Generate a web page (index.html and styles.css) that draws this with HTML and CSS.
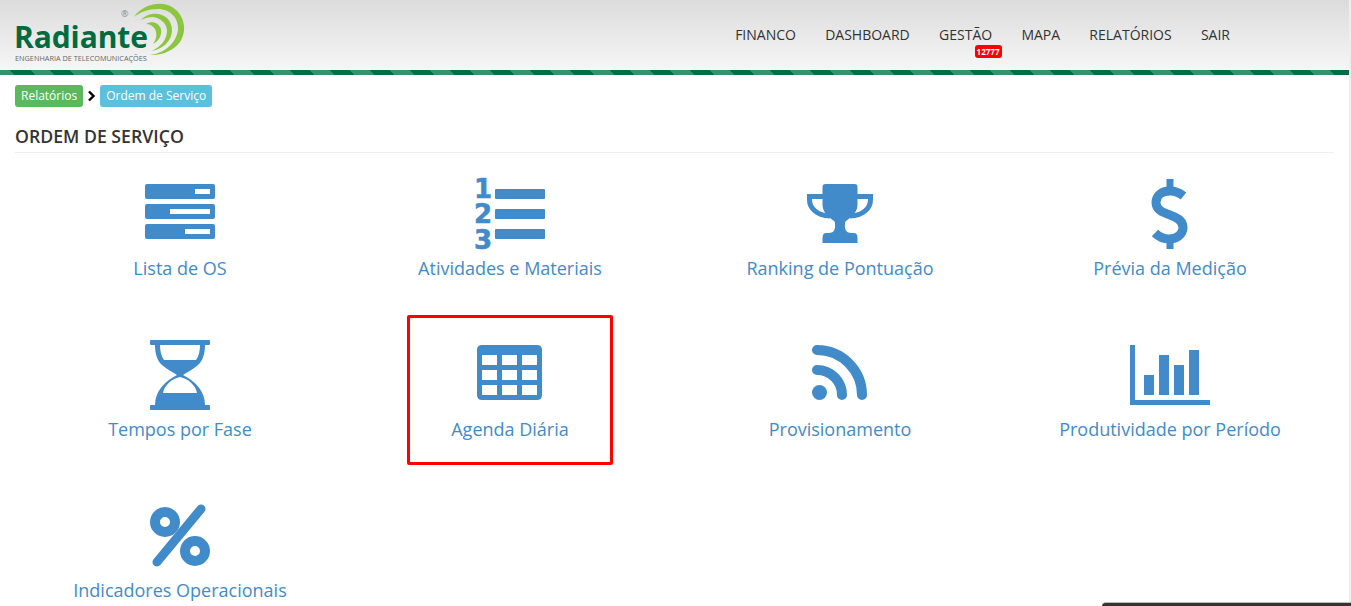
FILE: index.html
```html
<!DOCTYPE html>
<html lang="pt-BR">
<head>
<meta charset="utf-8">
<title>Ordem de Serviço</title>
<link rel="stylesheet" href="styles.css">
</head>
<body>
<header class="topbar">
  <a class="logo" href="#">
    <svg class="logo-svg" width="175" height="66" viewBox="15 0 175 66">
      <text class="logo-name" x="14" y="48">Radiante</text>
      <text class="logo-sub" x="15" y="60.500">ENGENHARIA DE TELECOMUNICAÇÕES</text>
      <text class="logo-reg" x="121" y="17">®</text>
      <path class="logo-arc" d="M134 17C142 5 160 0 172 7C184 14 188 30 180 42C174 50 162 56 150 55C164 53 176 44 178 30C179 18 170 9 158 9C148 9 140 12 134 17Z"/>
      <path class="logo-arc" d="M141 20C148 12 160 12 167 18C174 25 174 37 165 45C161 48 157 50 152 51C160 47 167 40 167 31C167 23 160 18 153 17C149 17 145 18 141 20Z"/>
      <path class="logo-arc" d="M146 24C152 20 159 23 161 29C162 35 159 41 153 44C157 39 157 33 155 29C153 26 150 24 146 24Z"/>
    </svg>
  </a>
  <nav class="nav">
    <a href="#">FINANCO</a>
    <a href="#">DASHBOARD</a>
    <a class="has-badge" href="#">GESTÃO<span class="badge">12777</span></a>
    <a href="#">MAPA</a>
    <a href="#">RELATÓRIOS</a>
    <a href="#">SAIR</a>
  </nav>
</header>
<div class="stripes"></div>
<main class="content">
  <div class="crumbs">
    <a class="crumb crumb-green" href="#">Relatórios</a>
    <svg class="chev" width="9" height="12" viewBox="0 0 9 12"><path d="M2 1.500L6.500 6L2 10.500"/></svg>
    <a class="crumb crumb-blue" href="#">Ordem de Serviço</a>
  </div>
  <h1 class="title">ORDEM DE SERVIÇO</h1>
  <div class="grid">
    <a class="tile" href="#">
      <svg class="ico" viewBox="0 0 80 80"><path fill-rule="evenodd" d="M7 9H73Q75 9 75 11V22Q75 24 73 24H7Q5 24 5 22V11Q5 9 7 9ZM55 14V19H70V14ZM7 29H73Q75 29 75 31V42Q75 44 73 44H7Q5 44 5 42V31Q5 29 7 29ZM30 34V39H70V34ZM7 49H73Q75 49 75 51V62Q75 64 73 64H7Q5 64 5 62V51Q5 49 7 49ZM45 54V59H70V54Z"/></svg>
      <span class="label">Lista de OS</span>
    </a>
    <a class="tile" href="#">
      <svg class="ico" viewBox="0 0 80 80">
        <text class="num" x="4" y="23">1</text><text class="num" x="4" y="48">2</text><text class="num" x="4" y="74">3</text>
        <rect x="25" y="14" width="50" height="10" rx="1"/><rect x="25" y="34" width="50" height="10" rx="1"/><rect x="25" y="54" width="50" height="10" rx="1"/>
      </svg>
      <span class="label">Atividades e Materiais</span>
    </a>
    <a class="tile" href="#">
      <svg class="ico" viewBox="0 0 80 80">
        <path d="M22.500 12Q22.500 9 25.500 9H54.500Q57.500 9 57.500 12V30C57.500 38 50 43 46 46C44.500 47 45 52 45 52C45 55 47 58 51 58H54Q57.500 58 57.500 63V68H22.500V63Q22.500 58 26 58H29C33 58 35 55 35 52C35 52 35.500 47 34 46C30 43 22.500 38 22.500 30Z"/>
        <path class="line" stroke-width="5" d="M23 21.500H9.500V25C9.500 33 17 40.500 30 41M57 21.500H70.500V25C70.500 33 63 40.500 50 41"/>
      </svg>
      <span class="label">Ranking de Pontuação</span>
    </a>
    <a class="tile" href="#">
      <svg class="ico" viewBox="0 0 80 80">
        <path class="line" stroke-width="9" d="M53.500 21C49 17.500 44 16 40 16C31 16 26 21 26 27.500C26 35 33 37.500 40 40C47 42.500 53 45.500 53 52.500C53 59 47 64 39 64C34 64 29 62 25 58"/>
        <rect x="36.500" y="4" width="7" height="12"/><rect x="36.500" y="62" width="7" height="12"/>
      </svg>
      <span class="label">Prévia da Medição</span>
    </a>
    <a class="tile" href="#">
      <svg class="ico" viewBox="0 0 80 80">
        <rect x="10" y="4" width="60" height="5" rx="1"/><rect x="10" y="69" width="60" height="5" rx="1"/>
        <path fill-rule="evenodd" d="M15 9H65C65 17 63 25 58 29C54 33 47 36 43 39C55 45 65 55 65 69H15C15 55 25 45 37 39C33 36 26 33 22 29C17 25 15 17 15 9ZM20 9C20 14 21 20 24 24H56C59 20 60 14 60 9ZM23 57H57C56 50 49 43 40 41C31 43 24 50 23 57Z"/>
      </svg>
      <span class="label">Tempos por Fase</span>
    </a>
    <a class="tile tile-marked" href="#">
      <svg class="ico" viewBox="0 0 80 80"><path fill-rule="evenodd" d="M12 9H67Q72 9 72 14V59Q72 64 67 64H12Q7 64 7 59V14Q7 9 12 9ZM12 19V29H27V19ZM32 19V29H47V19ZM52 19V29H67V19ZM12 34V44H27V34ZM32 34V44H47V34ZM52 34V44H67V34ZM12 49V59H27V49ZM32 49V59H47V49ZM52 49V59H67V49Z"/></svg>
      <span class="label">Agenda Diária</span>
    </a>
    <a class="tile" href="#">
      <svg class="ico" viewBox="0 0 80 80">
        <circle cx="19.500" cy="56.500" r="7.500"/>
        <path class="line round" stroke-width="10" d="M17 14A45 45 0 0 1 62 59M17 34A25 25 0 0 1 42 59"/>
      </svg>
      <span class="label">Provisionamento</span>
    </a>
    <a class="tile" href="#">
      <svg class="ico" viewBox="0 0 80 80">
        <rect x="0" y="9" width="5" height="60"/><rect x="0" y="64" width="80" height="5"/>
        <rect x="14" y="39" width="10" height="20"/><rect x="29" y="19" width="10" height="40"/><rect x="44" y="29" width="10" height="30"/><rect x="59" y="14" width="10" height="45"/>
      </svg>
      <span class="label">Produtividade por Período</span>
    </a>
    <a class="tile" href="#">
      <svg class="ico" viewBox="0 0 80 80">
        <circle class="line" stroke-width="10" cx="25" cy="25" r="10"/><circle class="line" stroke-width="10" cx="55" cy="54" r="10"/>
        <path class="line round" stroke-width="9" d="M61 12L17 65"/>
      </svg>
      <span class="label">Indicadores Operacionais</span>
    </a>
  </div>
</main>
<div class="dock"></div>
</body>
</html>
```
FILE: styles.css
```css
* { box-sizing: border-box; }
html {
  height: 100%;
  overflow: hidden;
  background: #eee;
}
body {
  height: 100%;
  margin: 0 2px 0 0;
  overflow: hidden;
  background: #fff;
  color: #333;
  font-family: "Open Sans", "Liberation Sans", sans-serif;
}
a { text-decoration: none; }

.topbar {
  display: flex;
  align-items: flex-start;
  justify-content: space-between;
  height: 70px;
  padding-right: 119px;
  background: linear-gradient(#dcdcdc, #f6f6f6);
}
.logo { display: block; margin-left: 15px; height: 66px; }
.logo-svg { display: block; }
.logo-name { font: 700 30px "Open Sans", sans-serif; fill: #006b3f; letter-spacing: -.1px; }
.logo-sub { font: 400 7.300px "Open Sans", sans-serif; fill: #666; }
.logo-reg { font: 400 9px "Open Sans", sans-serif; fill: #888; }
.logo-arc { fill: #8cc63f; }

.nav { display: flex; gap: 29.250px; padding-top: 25px; }
.nav a { color: #333; font-size: 14px; line-height: 19px; }
.has-badge { position: relative; }
.badge {
  position: absolute;
  left: 35.500px;
  top: 20px;
  width: 27px;
  height: 13px;
  border-radius: 3px;
  background: #f00;
  color: #fff;
  font-size: 8px;
  font-weight: 700;
  line-height: 13px;
  text-align: center;
}

.stripes {
  height: 5px;
  background: repeating-linear-gradient(45deg, #38916c 0 10.600px, #006f46 10.600px 24.750px, #38916c 24.750px 28.280px);
}

.content { padding: 10px 15px 0; }
.crumbs { display: flex; align-items: center; height: 22px; }
.crumb {
  height: 22px;
  padding: 0 6px;
  border-radius: 3px;
  color: #fff;
  font-size: 12px;
  line-height: 21px;
}
.crumb-green { background: #5cb85c; }
.crumb-blue { background: #5bc0de; }
.chev { margin: 0 4px; flex: none; }
.chev path { fill: none; stroke: #000; stroke-width: 2.400; }

.title {
  margin: 17px 0 0;
  padding-bottom: 4px;
  border-bottom: 1px solid #eee;
  color: #333;
  font-size: 17.700px;
  font-weight: 600;
  line-height: 24px;
}

.grid {
  display: grid;
  grid-template-columns: repeat(4, 330px);
  grid-auto-rows: 161px;
  margin-top: 22px;
}
.tile {
  position: relative;
  display: flex;
  flex-direction: column;
  align-items: center;
  color: #428bca;
}
.ico { display: block; width: 80px; height: 80px; fill: #428bca; flex: none; overflow: visible; }
.line { fill: none; stroke: #428bca; }
.round { stroke-linecap: round; }
.num { font: 700 26px "DejaVu Sans", sans-serif; fill: #428bca; stroke: #428bca; stroke-width: .6; }
.label { font-size: 18px; line-height: 26px; white-space: nowrap; }
.tile-marked::after {
  content: "";
  box-sizing: border-box;
  position: absolute;
  left: 62px;
  top: -21px;
  width: 206px;
  height: 150px;
  border: 3px solid #f00;
  border-radius: 2px;
}

.dock {
  position: fixed;
  right: 0;
  bottom: 0;
  width: 249px;
  height: 4px;
  background: #333;
  border-top: 1px solid #bbb;
  border-top-left-radius: 4px;
}
```
